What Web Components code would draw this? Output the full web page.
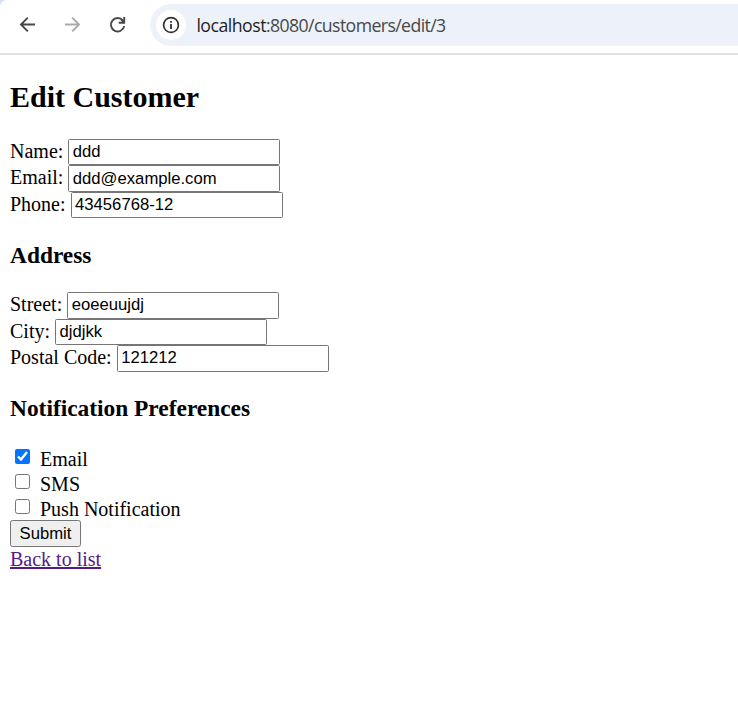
<!DOCTYPE html>
<html lang="en">
<head>
<meta charset="utf-8">
<title>Edit Customer</title>
<style>
body { margin: 0; background: #fff; overflow: hidden; font: 20px/25px "Liberation Serif", "Times New Roman", serif; color: #000; }
main { padding: 27px 10px 0; }
</style>
</head>
<body>
<browser-bar><span slot="host">localhost</span><span slot="path">:8080/customers/edit/3</span></browser-bar>
<main>
  <customer-form></customer-form>
</main>
<script>
function define(name, html, setup) {
  customElements.define(name, class extends HTMLElement {
    constructor() {
      super();
      const t = document.createElement('template');
      t.innerHTML = html;
      this.attachShadow({ mode: 'open' }).append(t.content.cloneNode(true));
    }
    connectedCallback() { if (setup) setup(this, this.shadowRoot); }
  });
}

define('browser-bar', `
<style>
:host { display: flex; box-sizing: border-box; height: 55px; padding-top: 4px; border-bottom: 2px solid #e2e2e2;
  background: radial-gradient(circle at 8px 8px, #fff 8px, #d3e3fd 8.8px) 0 0 / 8px 8px no-repeat #fff; }
nav { display: flex; width: 150px; height: 42px; align-items: center; padding-left: 17px; box-sizing: border-box; gap: 25px; }
svg { display: block; flex: none; }
.omni { flex: 1; display: flex; align-items: center; height: 42px; background: #ecf1fa; border-radius: 21px 0 0 21px; padding-left: 6px; }
.info { width: 30px; height: 30px; border-radius: 50%; background: #fff; display: grid; place-items: center; }
.url { margin: 0 0 0 10.4px; font: 17.7px/24px "Open Sans", "Noto Sans", sans-serif; letter-spacing: -0.6px; color: #474747; white-space: nowrap; }
.host { color: #1f1f1f; letter-spacing: -0.5px; }
</style>
<nav>
  <svg width="20" height="20" viewBox="0 0 20 20" fill="none" stroke="#474747" stroke-width="1.9"><path d="M18 9.5H4.3M10.8 2.7L4 9.5l6.8 6.8"/></svg>
  <svg width="20" height="20" viewBox="0 0 20 20" fill="none" stroke="#ababab" stroke-width="1.9"><path d="M3 9.5h13.7M10.2 2.7L17 9.5l-6.8 6.8"/></svg>
  <svg width="20" height="20" viewBox="0 0 20 20" fill="none" stroke="#474747" stroke-width="1.9"><path d="M17.2 11.1A6.7 6.7 0 1 1 15.9 5.6"/><path d="M17.2 2v5.7h-5.5M16.6 7.1l-2.2-2.4"/></svg>
</nav>
<div class="omni">
  <span class="info"><svg width="18" height="18" viewBox="0 0 18 18"><circle cx="9" cy="9" r="7.4" fill="none" stroke="#303030" stroke-width="1.7"/><path d="M8.1 8h1.8v5H8.1zM8.1 5h1.8v1.8H8.1z" fill="#303030"/></svg></span>
  <span class="url"><span class="host"><slot name="host"></slot></span><slot name="path"></slot></span>
</div>`);

define('form-heading', `
<style>
:host { display: block; font-weight: bold; font-size: 23.4px; line-height: 27px; padding: 23px 0 24px; }
:host([main]) { font-size: 30px; line-height: 30px; padding: 0 0 27px; }
:host([low]) { padding: 24px 0 23px; }
</style>
<slot></slot>`);

define('text-field', `
<style>
:host { display: flex; height: 26px; line-height: 24px; }
:host([tall]) { height: 27px; }
label { white-space: pre; }
input { box-sizing: border-box; width: 212px; height: 100%; margin: 0 0 0 5px; padding: 1px 3.5px; border: 1px solid #767676; border-radius: 1.5px;
  font: 16.667px "Liberation Sans", Arial, sans-serif; color: #000; background: #fff; }
:host([raised]) input { padding-bottom: 3px; }
</style>
<label><slot></slot></label><input type="text">`, (el, root) => {
  const i = root.querySelector('input');
  i.value = el.getAttribute('value');
});

define('check-field', `
<style>
:host { display: flex; height: 25px; line-height: 26px; }
input { width: 15px; height: 15px; margin: 3px 10px 0 5px; flex: none; }
</style>
<input type="checkbox"><label><slot></slot></label>`, (el, root) => {
  root.querySelector('input').checked = el.hasAttribute('checked');
});

define('submit-button', `
<style>
:host { display: flex; height: 27px; margin-top: -1px; }
button { box-sizing: border-box; width: 71px; height: 27px; margin: 0; padding: 0; border: 1px solid #767676; border-radius: 2.5px; background: #efefef;
  font: 16.667px "Liberation Sans", Arial, sans-serif; color: #000; }
</style>
<button type="button"><slot></slot></button>`);

define('back-link', `
<style>
:host { display: block; line-height: 25px; }
a { color: #551a8b; text-decoration: underline; }
</style>
<a href="#"><slot></slot></a>`);

define('customer-form', `
<style>:host { display: block; }</style>
<form-heading main>Edit Customer</form-heading>
<text-field value="ddd">Name:</text-field>
<text-field tall value="ddd@example.com">Email:</text-field>
<text-field value="43456768-12">Phone:</text-field>
<form-heading low>Address</form-heading>
<text-field tall raised value="eoeeuujdj">Street:</text-field>
<text-field value="djdjkk">City:</text-field>
<text-field tall raised value="121212">Postal Code:</text-field>
<form-heading>Notification Preferences</form-heading>
<check-field checked>Email</check-field>
<check-field>SMS</check-field>
<check-field>Push Notification</check-field>
<submit-button>Submit</submit-button>
<back-link>Back to list</back-link>`);
</script>
</body>
</html>
